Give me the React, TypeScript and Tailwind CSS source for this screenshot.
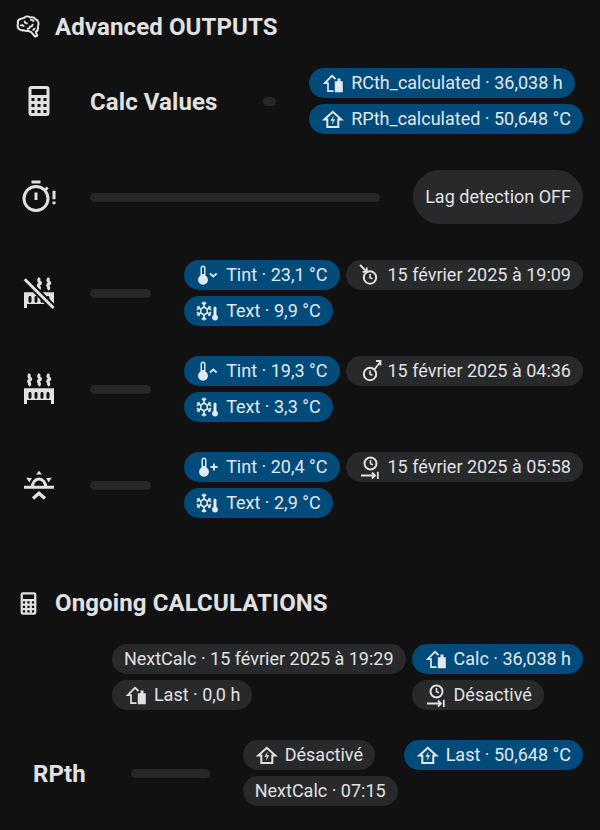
import type { ReactNode } from 'react'

type IconProps = { size?: number; children?: ReactNode }

function Svg({ size = 24, children }: IconProps) {
  return (
    <svg
      width={size}
      height={size}
      viewBox="0 0 24 24"
      fill="none"
      stroke="currentColor"
      strokeWidth="2"
      className="shrink-0 overflow-visible"
    >
      {children}
    </svg>
  )
}

const Brain = ({ size = 27 }: IconProps) => (
  <Svg size={size}>
    <path
      strokeWidth="1.800"
      strokeLinejoin="round"
      d="M8 3.500c1.500-1.600 4-1.700 5.500-.4 2-.5 3.800.2 4.700 1.500 2.300.6 3.600 3.900 2.200 6.400.5 2.200-.4 4-2 4.900l1.400 3.400-2 .8-3.400-4c-1-.1-1.900-.6-2.500-1.300-1.200.6-2.700.4-3.800-.4-2.600.6-5.400-.7-5.800-3.300-.1-.9 0-1.700.4-2.500-.6-1.800.3-3.500 2-4.200C5 4.700 6.500 3.500 8 3.500Z"
    />
    <path
      strokeWidth="1.700"
      d="M4.500 10.500c1.500-1 3-.5 3.500.8M8.500 6c0 2 1.200 2.700 2.800 2.200M10.500 13c1.700.3 2.800-.5 2.800-1.800 1.800 0 2.700-1 2.200-2.400M13.500 5.500c1.500-.6 2.700 0 3.200 1.400M15.500 14c1 .2 2-.5 2-1.700"
    />
  </Svg>
)

const Calculator = ({ size = 27 }: IconProps) => (
  <Svg size={size}>
    <path
      fill="currentColor"
      stroke="none"
      fillRule="evenodd"
      d="M7 2h10a2 2 0 0 1 2 2v16a2 2 0 0 1-2 2H7a2 2 0 0 1-2-2V4a2 2 0 0 1 2-2ZM7 4v4h10V4H7ZM7 10v2h2v-2H7Zm4 0v2h2v-2h-2Zm4 0v2h2v-2h-2ZM7 14v2h2v-2H7Zm4 0v2h2v-2h-2Zm4 0v2h2v-2h-2ZM7 18v2h2v-2H7Zm4 0v2h2v-2h-2Zm4 0v2h2v-2h-2Z"
    />
  </Svg>
)

const TimerAlert = () => (
  <Svg size={36}>
    <circle cx="10" cy="13" r="8" />
    <path d="M7 2h6M10 9v5M16.300 7.200l1.500-1.500" />
    <path d="M22 7.800v5.700M22 15v1.800" />
  </Svg>
)

const radiatorBody =
  'M2 11.500h20V22h-2v-2.700H4V22H2V11.500ZM6 14c-.6 0-1 .4-1 1v2.500c0 .6.4 1 1 1s1-.4 1-1V15c0-.6-.4-1-1-1Zm4 0c-.6 0-1 .4-1 1v2.500c0 .6.4 1 1 1s1-.4 1-1V15c0-.6-.4-1-1-1Zm4 0c-.6 0-1 .4-1 1v2.500c0 .6.4 1 1 1s1-.4 1-1V15c0-.6-.4-1-1-1Zm4 0c-.6 0-1 .4-1 1v2.500c0 .6.4 1 1 1s1-.4 1-1V15c0-.6-.4-1-1-1Z'

const Steam = ({ x }: { x: number }) => (
  <path
    strokeWidth="2"
    d={`M${x + 1} 2c-2.500 2.500 2.200 3-.2 4-2.200 1.200 1.500 1.800-.6 3.800`}
  />
)

const Radiator = () => (
  <Svg size={36}>
    <Steam x={5} />
    <Steam x={11.500} />
    <Steam x={17.700} />
    <path fill="currentColor" stroke="none" fillRule="evenodd" d={radiatorBody} />
  </Svg>
)

const RadiatorOff = () => (
  <Svg size={36}>
    <Steam x={11.500} />
    <Steam x={17.700} />
    <path fill="currentColor" stroke="none" fillRule="evenodd" d={radiatorBody} />
    <path d="M2.500 2.800 21.700 22" stroke="#111111" strokeWidth="4.500" />
    <path d="M2.500 2.800 21.700 22" />
  </Svg>
)

const SunAngle = () => (
  <Svg size={36}>
    <path d="M2 13.500h20M7.500 13.500a4.500 5.500 0 0 1 9 0" />
    <path d="M8 21l4-3.500 4 3.500" strokeWidth="2.200" />
    <path
      fill="currentColor"
      stroke="none"
      d="M12 2.500 14 5h-4ZM3.500 7l3.800.500-1.800 2.800ZM20.500 7l-3.800.500 1.800 2.800Z"
    />
  </Svg>
)

const HomeBattery = () => (
  <Svg>
    <path strokeWidth="1.700" d="M14.500 20.200H9v-8H5.700L13 4.800l3.500 3.200" />
    <path fill="currentColor" stroke="none" d="M18.500 7.500h3v2.800h2.300v11h-8v-11h2.700Z" />
  </Svg>
)

const HomeBolt = () => (
  <Svg>
    <g transform="translate(1.800 0)">
      <path strokeWidth="2" d="M6.500 20v-7.500H3.500L12 4.800l8.500 7.700h-3V20H6.500Z" />
      <path fill="currentColor" stroke="none" d="M13 8.500l-3.400 5.300H12l-1 4.200 3.400-5.700H12Z" />
    </g>
  </Svg>
)

const Thermo = ({ cx = 9 }: { cx?: number }) => (
  <path
    fill="currentColor"
    stroke="none"
    d={`M${cx} 2.500a2.500 2.500 0 0 1 2.500 2.500v7.500a5 5 0 1 1-5 0V5a2.500 2.500 0 0 1 2.500-2.500Zm0 1.500a1 1 0 0 0-1 1v6h2V5a1 1 0 0 0-1-1Z`}
    fillRule="evenodd"
  />
)

const ThermoDown = () => (
  <Svg>
    <Thermo />
    <path strokeWidth="1.800" d="M16 10.500l3.300 3 3.300-3" />
  </Svg>
)

const ThermoUp = () => (
  <Svg>
    <Thermo />
    <path strokeWidth="1.800" d="M16 13.500l3.300-3 3.300 3" />
  </Svg>
)

const ThermoPlus = () => (
  <Svg>
    <Thermo cx={10} />
    <path strokeWidth="1.800" d="M16.500 12h7M20 8.500v7" />
  </Svg>
)

const SnowThermo = () => (
  <Svg>
    <g strokeWidth="1.500">
      <path d="M10 2.500v6M10 15.500v6M7.800 3.500l2.200 2.200 2.200-2.200M7.800 20.500l2.200-2.200 2.200 2.200" />
      <path d="M3 8l4 2.300M17 8l-4 2.300M3 16l4-2.300M17 16l-4-2.300" />
      <path d="M2.800 10.800 5.200 9.400l-.4-2.600M17.200 10.800l-2.400-1.400.4-2.600M2.800 13.200l2.400 1.400-.4 2.600M17.200 13.200l-2.400 1.400.4 2.600" />
      <path d="M10 8l3.200 2v4L10 16l-3.200-2v-4Z" />
    </g>
    <path
      fill="currentColor"
      stroke="none"
      d="M21 7.500a1.500 1.500 0 0 1 1.500 1.500v7a3 3 0 1 1-3 0V9A1.500 1.500 0 0 1 21 7.500Z"
    />
  </Svg>
)

const ClockIn = () => (
  <Svg>
    <circle cx="14" cy="14.500" r="6.200" />
    <path strokeWidth="1.600" d="M14 11v3.800l2.500 1" />
    <path strokeWidth="1.800" d="M4 2l6.500 6.500M10.800 4.500v4.300H6.500" />
  </Svg>
)

const ClockOut = () => (
  <Svg>
    <circle cx="14" cy="15" r="6.200" />
    <path strokeWidth="1.600" d="M14 11.500v3.800l2.500 1" />
    <path strokeWidth="1.800" d="M18.500 10.500 24.500 2.500M20 2h4.500v4.500" />
  </Svg>
)

const ClockEnd = () => (
  <Svg>
    <circle cx="14.500" cy="8.500" r="6" />
    <path strokeWidth="1.600" d="M14.500 5v3.800l2.500 1" />
    <path strokeWidth="1.800" d="M5 20.500h14M16 17.500l3 3-3 3M21.800 16.800v7.200" />
  </Svg>
)

function Chip({ icon, blue, children }: { icon?: ReactNode; blue?: boolean; children: ReactNode }) {
  return (
    <div
      className={`flex h-[30px] w-fit items-center whitespace-nowrap rounded-full pr-[12px] text-[18px] ${
        icon ? 'gap-[8px] pl-[10px]' : 'pl-[12px]'
      } ${blue ? 'bg-[#004b79] text-[#e1e8ee]' : 'bg-[#28292b] text-[#e1e1e1]'}`}
    >
      {icon}
      <span className="pb-[1px]">{children}</span>
    </div>
  )
}

const Bar = ({ className }: { className: string }) => (
  <div className={`h-[9px] rounded-full bg-[#26272a] ${className}`} />
)

function Row({ children, className = '' }: { children: ReactNode; className?: string }) {
  return <div className={`flex h-[66px] items-center pr-[17px] ${className}`}>{children}</div>
}

const Left = ({ children }: { children: ReactNode }) => (
  <div className="ml-[21px] mr-[33px] shrink-0 text-[#e1e1e1]">{children}</div>
)

const Col = ({ children }: { children: ReactNode }) => (
  <div className="flex flex-col gap-[6px]">{children}</div>
)

function Title({ icon, children }: { icon: ReactNode; children: ReactNode }) {
  return (
    <div className="flex h-[54px] items-center gap-[13px] pl-[15px] text-[#e1e1e1]">
      {icon}
      <h2 className="text-[24px] font-bold tracking-[0.12px]">{children}</h2>
    </div>
  )
}

export default function App() {
  return (
    <div
      className="h-[830px] w-[600px] overflow-hidden bg-[#111111]"
      style={{ fontFamily: 'Roboto, sans-serif' }}
    >
      <Title icon={<Brain />}>Advanced OUTPUTS</Title>
      <div className="mt-[14px] flex flex-col gap-[30px]">
        <Row>
          <Left>
            <Calculator size={36} />
          </Left>
          <span className="mr-[45px] pt-[2px] text-[24px] font-bold tracking-[0.1px] text-[#e1e1e1]">Calc Values</span>
          <Bar className="mr-[33px] flex-1" />
          <Col>
            <Chip blue icon={<HomeBattery />}>RCth_calculated · 36,038 h</Chip>
            <Chip blue icon={<HomeBolt />}>RPth_calculated · 50,648 °C</Chip>
          </Col>
        </Row>
        <Row>
          <Left>
            <TimerAlert />
          </Left>
          <Bar className="mr-[33px] flex-1" />
          <div className="flex h-[54px] items-center rounded-full bg-[#28292b] px-[12px] pb-[1px] text-[18px] text-[#e1e1e1]">
            Lag detection OFF
          </div>
        </Row>
        <Row>
          <Left>
            <RadiatorOff />
          </Left>
          <Bar className="mr-[33px] flex-1" />
          <div className="flex gap-[6px]">
            <Col>
              <Chip blue icon={<ThermoDown />}>Tint · 23,1 °C</Chip>
              <Chip blue icon={<SnowThermo />}>Text · 9,9 °C</Chip>
            </Col>
            <Col>
              <Chip icon={<ClockIn />}>15 février 2025 à 19:09</Chip>
            </Col>
          </div>
        </Row>
        <Row>
          <Left>
            <Radiator />
          </Left>
          <Bar className="mr-[33px] flex-1" />
          <div className="flex gap-[6px]">
            <Col>
              <Chip blue icon={<ThermoUp />}>Tint · 19,3 °C</Chip>
              <Chip blue icon={<SnowThermo />}>Text · 3,3 °C</Chip>
            </Col>
            <Col>
              <Chip icon={<ClockOut />}>15 février 2025 à 04:36</Chip>
            </Col>
          </div>
        </Row>
        <Row>
          <Left>
            <SunAngle />
          </Left>
          <Bar className="mr-[33px] flex-1" />
          <div className="flex gap-[6px]">
            <Col>
              <Chip blue icon={<ThermoPlus />}>Tint · 20,4 °C</Chip>
              <Chip blue icon={<SnowThermo />}>Text · 2,9 °C</Chip>
            </Col>
            <Col>
              <Chip icon={<ClockEnd />}>15 février 2025 à 05:58</Chip>
            </Col>
          </div>
        </Row>
      </div>

      <div className="mt-[58px]">
        <Title icon={<Calculator />}>Ongoing CALCULATIONS</Title>
      </div>
      <div className="mt-[14px] flex flex-col gap-[30px]">
        <Row className="justify-end">
          <div className="flex gap-[6px]">
            <Col>
              <Chip>NextCalc · 15 février 2025 à 19:29</Chip>
              <Chip icon={<HomeBattery />}>Last · 0,0 h</Chip>
            </Col>
            <Col>
              <Chip blue icon={<HomeBattery />}>Calc · 36,038 h</Chip>
              <Chip icon={<ClockEnd />}>Désactivé</Chip>
            </Col>
          </div>
        </Row>
        <Row>
          <span className="ml-[33px] mr-[45px] pt-[2px] text-[24px] font-bold text-[#e1e1e1]">RPth</span>
          <Bar className="mr-[33px] flex-1" />
          <div className="flex gap-[6px]">
            <Col>
              <Chip icon={<HomeBolt />}>Désactivé</Chip>
              <Chip>NextCalc · 07:15</Chip>
            </Col>
            <Col>
              <Chip blue icon={<HomeBolt />}>Last · 50,648 °C</Chip>
            </Col>
          </div>
        </Row>
      </div>
    </div>
  )
}
